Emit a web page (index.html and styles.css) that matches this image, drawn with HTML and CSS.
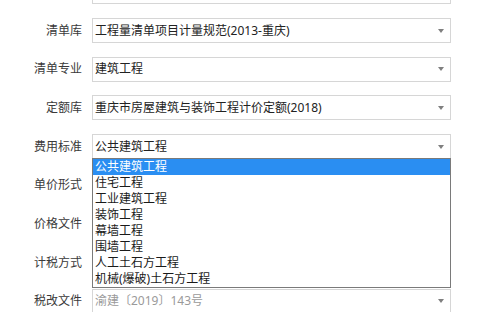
FILE: index.html
```html
<!DOCTYPE html>
<html lang="zh-CN">
<head>
<meta charset="utf-8">
<title>工程设置</title>
<link rel="stylesheet" href="styles.css">
</head>
<body>
<div class="form">
  <div class="row">
    <span class="lbl"></span>
    <div class="select"><span class="val"></span><i class="caret"></i></div>
  </div>
  <div class="row">
    <span class="lbl">清单库</span>
    <div class="select"><span class="val">工程量清单项目计量规范(2013-重庆)</span><i class="caret"></i></div>
  </div>
  <div class="row">
    <span class="lbl">清单专业</span>
    <div class="select"><span class="val">建筑工程</span><i class="caret"></i></div>
  </div>
  <div class="row">
    <span class="lbl">定额库</span>
    <div class="select"><span class="val">重庆市房屋建筑与装饰工程计价定额(2018)</span><i class="caret"></i></div>
  </div>
  <div class="row">
    <span class="lbl">费用标准</span>
    <div class="select">
      <span class="val">公共建筑工程</span><i class="caret"></i>
      <ul class="menu">
        <li class="item active">公共建筑工程</li>
        <li class="item">住宅工程</li>
        <li class="item">工业建筑工程</li>
        <li class="item">装饰工程</li>
        <li class="item">幕墙工程</li>
        <li class="item">围墙工程</li>
        <li class="item">人工土石方工程</li>
        <li class="item">机械(爆破)土石方工程</li>
      </ul>
    </div>
  </div>
  <div class="row">
    <span class="lbl">单价形式</span>
    <div class="select"><span class="val"></span><i class="caret"></i></div>
  </div>
  <div class="row">
    <span class="lbl">价格文件</span>
    <div class="select"><span class="val"></span><i class="caret"></i></div>
  </div>
  <div class="row">
    <span class="lbl">计税方式</span>
    <div class="select"><span class="val"></span><i class="caret"></i></div>
  </div>
  <div class="row">
    <span class="lbl">税改文件</span>
    <div class="select disabled"><span class="val">渝建〔2019〕143号</span><i class="caret"></i></div>
  </div>
</div>
</body>
</html>
```

FILE: styles.css
```css
html, body {
  margin: 0;
  padding: 0;
  background: #ffffff;
  overflow: hidden;
}

body {
  width: 482px;
  height: 312px;
  font-family: "Noto Sans", "Noto Sans CJK SC", sans-serif;
  font-size: 12px;
  color: #333333;
}

.form {
  display: flex;
  flex-direction: column;
  gap: 13.7px;
  margin-top: -20.7px;
}

.row {
  display: flex;
  align-items: center;
  height: 25px;
}

.lbl {
  width: 82px;
  margin-right: 10px;
  text-align: right;
  font-size: 12px;
  line-height: 16px;
  color: #3a3a3a;
  white-space: nowrap;
}

.select {
  position: relative;
  width: 359px;
  height: 25px;
  box-sizing: border-box;
  border: 1px solid #d6d6d6;
  background: #ffffff;
  display: flex;
  align-items: center;
  padding-left: 2px;
}

.val {
  font-size: 12px;
  line-height: 16px;
  color: #222222;
  white-space: nowrap;
}

.disabled .val {
  color: #9a9a9a;
}

.caret {
  margin-left: auto;
  margin-right: 6px;
  width: 0;
  height: 0;
  border-left: 3.5px solid transparent;
  border-right: 3.5px solid transparent;
  border-top: 4px solid #7f7f7f;
}

.menu {
  position: absolute;
  top: 22.5px;
  left: -1px;
  width: 359px;
  box-sizing: border-box;
  margin: 0;
  padding: 0;
  list-style: none;
  background: #ffffff;
  border: 1px solid #7a7a7a;
  z-index: 10;
}

.item {
  height: 16px;
  line-height: 16px;
  padding-left: 2px;
  font-size: 12px;
  color: #1a1a1a;
  white-space: nowrap;
}

.item.active {
  background: #2a8ef2;
  color: #ffffff;
}
```
